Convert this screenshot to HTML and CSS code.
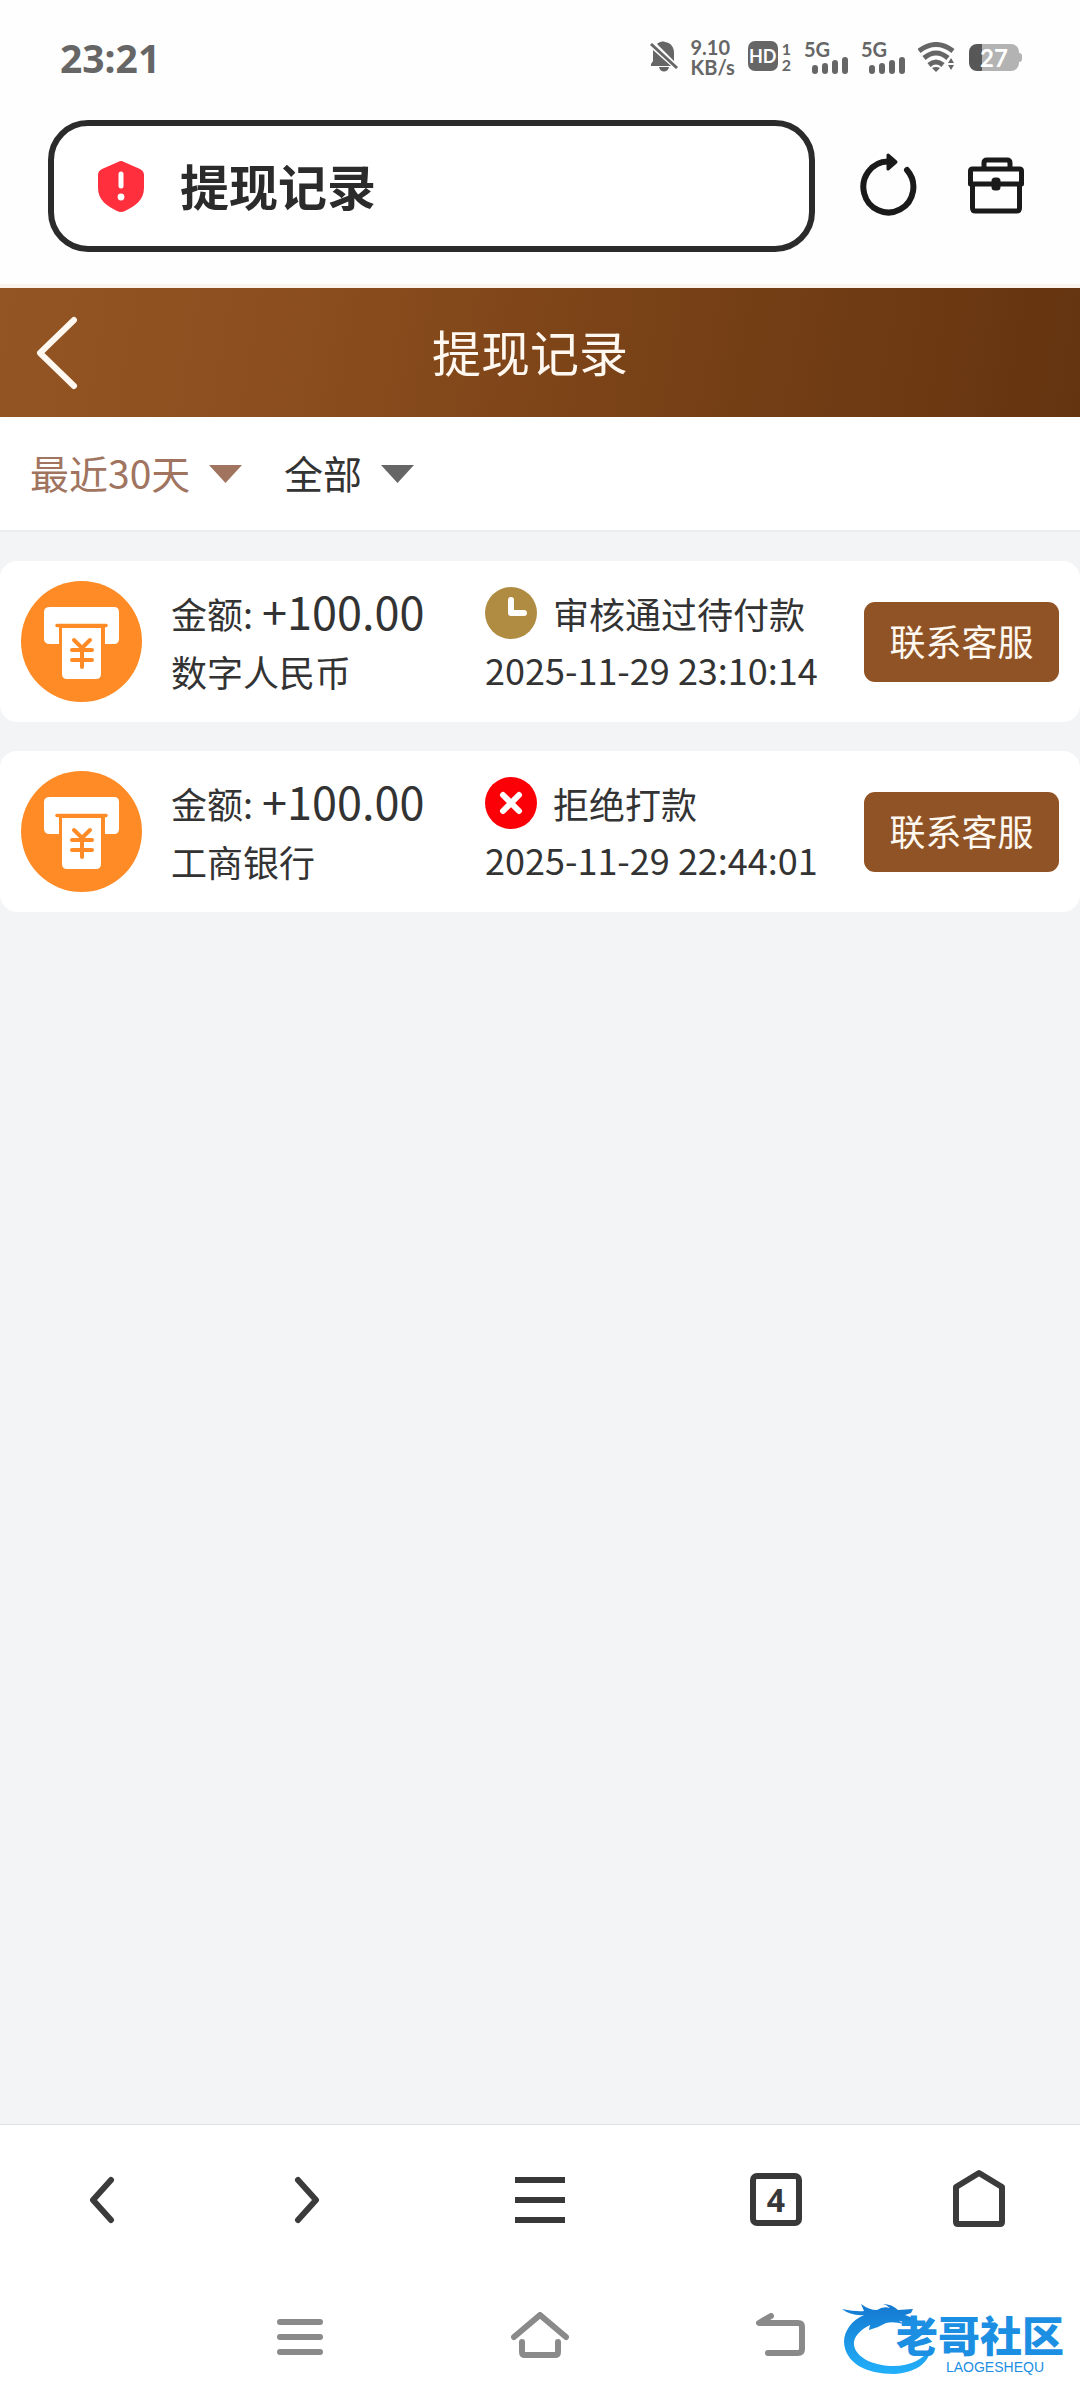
FILE: index.html
```html
<!DOCTYPE html>
<html lang="zh-CN">
<head>
<meta charset="utf-8">
<meta name="viewport" content="width=device-width, initial-scale=1">
<title>提现记录</title>
<link rel="stylesheet" href="styles.css">
</head>
<body>
<div class="status-bar">
  <span class="clock">23:21</span>
  <div class="status-icons">
    <svg class="bell" width="28" height="32" viewBox="0 0 28 32" aria-hidden="true">
      <path fill="#666" d="M7 3C9 1 12 0 15 1c6 1 9 5 9 11v8zM3 9l18 16H1v-2l2-3zM9 26h10c-1 6-9 6-10 0z"/>
      <path d="M1 3l26 24" stroke="#666" stroke-width="3"/>
    </svg>
    <span class="speed"><span>9.10</span><span>KB/s</span></span>
    <span class="hd"><span class="hd-badge">HD</span><span class="sim"><span>1</span><span>2</span></span></span>
    <span class="signal">5G
      <svg width="36" height="17" viewBox="0 0 36 17" aria-hidden="true"><path d="M3 11v3M13 9v5M23 6v8M33 3v11" stroke="#666" stroke-width="6" stroke-linecap="round"/></svg>
    </span>
    <span class="signal">5G
      <svg width="36" height="17" viewBox="0 0 36 17" aria-hidden="true"><path d="M3 11v3M13 9v5M23 6v8M33 3v11" stroke="#666" stroke-width="6" stroke-linecap="round"/></svg>
    </span>
    <svg width="38" height="30" viewBox="0 0 38 30" aria-hidden="true">
      <g fill="none" stroke="#666" stroke-width="5"><path d="M1 9q17-13 34 0"/><path d="M6 16q12-10 24 0"/><path d="M11 23q7-6 14 0"/></g>
      <path fill="#666" d="M14 26q4-2 8 0l-4 4zM30 21l3-5 3 5zM30 23l3 5 3-5z"/>
    </svg>
    <span class="battery">27</span>
  </div>
</div>

<div class="address-bar">
  <label class="address">
    <svg width="46" height="52" viewBox="0 0 46 52" aria-hidden="true">
      <path fill="#ff2f3e" d="M20 2q3-2 6 0l16 7q4 2 4 6v13c0 12-9 18-19 23q-4 2-8 0C9 46 0 40 0 28V15q0-4 4-6z"/>
      <path d="M23 14v12" stroke="#fff" stroke-width="5" stroke-linecap="round"/><circle cx="23" cy="37" r="3.400" fill="#fff"/>
    </svg>
    <input type="text" value="提现记录" aria-label="地址">
  </label>
  <div class="address-actions">
    <button type="button" aria-label="刷新">
      <svg width="60" height="66" viewBox="0 0 60 66" fill="none" aria-hidden="true">
        <path d="M49 17A25 25.500 0 1 1 30 8.500" stroke="#1a1a1a" stroke-width="6" stroke-linecap="round"/>
        <path d="M30 2l8 7-8 7z" fill="#1a1a1a" stroke="#1a1a1a" stroke-width="3" stroke-linejoin="round"/>
      </svg>
    </button>
    <button type="button" aria-label="工具箱">
      <svg width="60" height="66" viewBox="0 0 60 66" fill="none" stroke="#1a1a1a" stroke-width="5" stroke-linejoin="round" aria-hidden="true">
        <path d="M18 15V10q0-3 3-3h20q3 0 3 3v5M4.500 31V18q0-2 2-2h47q2 0 2 2v13zM6.500 31v24q0 3 3 3h41q3 0 3-3V31"/>
        <rect x="28" y="27" width="4" height="8" rx="1"/>
      </svg>
    </button>
  </div>
</div>

<header class="page-header">
  <a class="back" href="#" aria-label="返回">
    <svg width="42" height="74" viewBox="0 0 42 74" aria-hidden="true"><path d="M38 4L4 37l34 33" fill="none" stroke="#fff8f0" stroke-width="6" stroke-linecap="round" stroke-linejoin="round"/></svg>
  </a>
  <h1>提现记录</h1>
</header>

<div class="filters">
  <label class="filter filter-active">
    <select aria-label="时间范围"><option>最近30天</option></select>
    <svg width="33" height="18" viewBox="0 0 33 18" aria-hidden="true"><path d="M0 0h33L16.500 18z" fill="#a0745e"/></svg>
  </label>
  <label class="filter">
    <select aria-label="状态"><option>全部</option></select>
    <svg width="33" height="18" viewBox="0 0 33 18" aria-hidden="true"><path d="M0 0h33L16.500 18z" fill="#666"/></svg>
  </label>
</div>

<main class="records">
  <article class="record">
    <svg class="atm" viewBox="0 0 121 121" aria-hidden="true">
      <circle cx="60.500" cy="60.500" r="60.500" fill="#ff8b26"/>
      <path fill="#fff" d="M29 26h64q5 0 5 5v27q0 5-5 5h-9V46H38v17h-9q-6 0-6-5V31q0-5 6-5z"/>
      <path d="M36 44.500h49" stroke="#ff8b26" stroke-width="3.500" stroke-linecap="round"/>
      <path fill="#fff" d="M41 47h39v46q0 5-5 5H46q-5 0-5-5z"/>
      <path d="M53 59l8 8 8-8M61 67v19M51 69h20M51 79h20" fill="none" stroke="#ff8b26" stroke-width="4" stroke-linecap="round"/>
    </svg>
    <div class="info"><div class="line">金额:<span class="sum">+100.00</span></div><div class="line">数字人民币</div></div>
    <div class="state">
      <div class="line">
        <svg width="52" height="52" viewBox="0 0 52 52" aria-hidden="true"><circle cx="26" cy="26" r="26" fill="#b08c42"/><path d="M26 13v13h13" fill="none" stroke="#fff" stroke-width="6" stroke-linecap="round" stroke-linejoin="round"/></svg>
        审核通过待付款
      </div>
      <div class="line"><time>2025-11-29 23:10:14</time></div>
    </div>
    <button class="contact" type="button">联系客服</button>
  </article>

  <article class="record">
    <svg class="atm" viewBox="0 0 121 121" aria-hidden="true">
      <circle cx="60.500" cy="60.500" r="60.500" fill="#ff8b26"/>
      <path fill="#fff" d="M29 26h64q5 0 5 5v27q0 5-5 5h-9V46H38v17h-9q-6 0-6-5V31q0-5 6-5z"/>
      <path d="M36 44.500h49" stroke="#ff8b26" stroke-width="3.500" stroke-linecap="round"/>
      <path fill="#fff" d="M41 47h39v46q0 5-5 5H46q-5 0-5-5z"/>
      <path d="M53 59l8 8 8-8M61 67v19M51 69h20M51 79h20" fill="none" stroke="#ff8b26" stroke-width="4" stroke-linecap="round"/>
    </svg>
    <div class="info"><div class="line">金额:<span class="sum">+100.00</span></div><div class="line">工商银行</div></div>
    <div class="state">
      <div class="line">
        <svg width="52" height="52" viewBox="0 0 52 52" aria-hidden="true"><circle cx="26" cy="26" r="26" fill="#fb0007"/><path d="M18 18l16 16M34 18L18 34" stroke="#fff" stroke-width="6" stroke-linecap="round"/></svg>
        拒绝打款
      </div>
      <div class="line"><time>2025-11-29 22:44:01</time></div>
    </div>
    <button class="contact" type="button">联系客服</button>
  </article>
</main>

<nav class="toolbar" aria-label="浏览器">
  <button type="button" aria-label="后退"><svg width="28" height="48" viewBox="0 0 28 48" aria-hidden="true"><path d="M24 4L6 24l18 20" class="stroke-dark"/></svg></button>
  <button type="button" aria-label="前进"><svg width="28" height="48" viewBox="0 0 28 48" aria-hidden="true"><path d="M4 4l18 20L4 44" class="stroke-dark"/></svg></button>
  <button type="button" aria-label="菜单"><svg width="50" height="48" viewBox="0 0 50 48" aria-hidden="true"><path d="M0 4h50M0 24h50M0 44h50" stroke="#383838" stroke-width="6"/></svg></button>
  <button type="button" aria-label="标签页"><span class="tab-count">4</span></button>
  <button type="button" aria-label="主页"><svg width="52" height="62" viewBox="0 0 52 62" aria-hidden="true"><path d="M3 18L26 4l23 14v35q0 2-2 2H5q-2 0-2-2z" class="stroke-dark"/></svg></button>
</nav>

<nav class="system-nav" aria-label="系统">
  <button type="button" aria-label="最近任务"><svg width="46" height="38" viewBox="0 0 46 38" aria-hidden="true"><path d="M3 4h40M3 19h40M3 34h40" class="stroke-gray"/></svg></button>
  <button type="button" aria-label="桌面"><svg width="58" height="50" viewBox="0 0 58 50" aria-hidden="true"><path d="M3 25L29 3l26 22M11 30v10q0 3 3 3h30q3 0 3-3V30" class="stroke-gray"/></svg></button>
  <button type="button" aria-label="返回上级"><svg width="50" height="48" viewBox="0 0 50 48" aria-hidden="true"><path d="M16 3L4 10h39q4 0 4 4v22q0 4-4 4H13" class="stroke-gray"/></svg></button>
  <div class="watermark">
    <svg width="100" height="80" viewBox="0 0 100 80" aria-hidden="true">
      <defs><linearGradient id="sea" x2="0" y2="1"><stop stop-color="#1478cf"/><stop offset="1" stop-color="#22b0fa"/></linearGradient></defs>
      <path fill="url(#sea)" d="M0 9q15 3 22 2l-3-7q8 6 16 6 6-4 13-2-3-3-7-4 9 0 15 6l15-1-2 4-6 2 8 3-3 4-11-1 5 3q-11-3-18-1l-8 4-9 3 1-5C18 30 11 37 12 45c2 13 20 21 40 21 16 0 30-7 37-18C87 64 72 73 52 74 24 74 3 63 2 42 2 31 10 20 22 15Q9 16 0 9z"/>
    </svg>
    <span class="mark-name">老哥社区</span>
    <span class="mark-latin">LAOGESHEQU</span>
  </div>
</nav>
</body>
</html>
```
FILE: styles.css
```css
* { box-sizing: border-box; }

body {
  margin: 0;
  min-height: 100vh;
  display: flex;
  flex-direction: column;
  background: #f3f4f6;
  color: #333;
  font-family: "Noto Sans CJK SC", "Noto Sans", sans-serif;
  font-size: 36px;
}

button, input, select {
  margin: 0;
  padding: 0;
  border: 0;
  background: none;
  color: inherit;
  font: inherit;
}

svg { display: block; flex: none; }

/* Phone status bar */
.status-bar {
  height: 114px;
  padding: 0 61px 0 60px;
  display: flex;
  align-items: center;
  justify-content: space-between;
  background: #fefefe;
  color: #666;
  font-family: "Noto Sans", sans-serif;
  font-weight: 700;
}
.clock { font-size: 39px; }
.status-icons {
  display: flex;
  align-items: center;
  gap: 13px;
  font-family: Lato, sans-serif;
}
.speed {
  display: flex;
  flex-direction: column;
  font-size: 20px;
  line-height: 20px;
}
.hd { display: flex; gap: 4px; }
.hd-badge {
  width: 30px;
  height: 30px;
  border-radius: 7px;
  background: #666;
  color: #fff;
  font-size: 18px;
  line-height: 30px;
  text-align: center;
}
.sim {
  display: flex;
  flex-direction: column;
  font-size: 16px;
  line-height: 16px;
}
.signal {
  width: 44px;
  height: 32px;
  display: flex;
  flex-direction: column;
  font-size: 20px;
  line-height: 16px;
}
.signal svg { align-self: flex-end; }
.battery {
  position: relative;
  width: 50px;
  height: 27px;
  border-radius: 8px;
  background: linear-gradient(90deg, #575757 27%, #b3b3b3 27%);
  color: #fff;
  font-size: 24px;
  line-height: 27px;
  text-align: center;
}
.battery::after {
  content: "";
  position: absolute;
  top: 9px;
  right: -3px;
  width: 3px;
  height: 9px;
  border-radius: 0 3px 3px 0;
  background: #b3b3b3;
}

/* Browser address bar */
.address-bar {
  padding: 6px 54px 32px 48px;
  border-bottom: 4px solid #faf4ef;
  display: flex;
  align-items: center;
  gap: 43px;
  background: #fefefe;
}
.address {
  flex: 1;
  min-width: 0;
  height: 132px;
  padding: 0 44px;
  border: 6px solid #2b2b2b;
  border-radius: 40px;
  display: flex;
  align-items: center;
  gap: 36px;
  background: #fff;
}
.address input {
  flex: 1;
  min-width: 0;
  padding-bottom: 4px;
  color: #2b2b2b;
  font-size: 49px;
  font-weight: 700;
}
.address-actions { display: flex; gap: 48px; }

/* Page header */
.page-header {
  height: 129px;
  display: grid;
  grid-template-columns: 100px 1fr 120px;
  align-items: center;
  background: linear-gradient(100deg, #935523, #8a4d1d 30%, #7a4217 58%, #643410);
}
.back { padding-left: 36px; }
.page-header h1 {
  margin: 0;
  padding-bottom: 4px;
  color: #fff8f0;
  font-size: 49px;
  font-weight: 400;
  text-align: center;
}

/* Filters */
.filters {
  height: 115px;
  padding: 0 30px;
  border-bottom: 2px solid #ebecee;
  display: flex;
  align-items: center;
  gap: 42px;
  background: #fff;
}
.filter { display: flex; align-items: center; gap: 18px; }
.filter-active { color: #a0745e; }
.filter select {
  appearance: none;
  padding-bottom: 4px;
  font-size: 39px;
}

/* Withdrawal records */
.records {
  flex: 1;
  padding: 29px 0;
  display: flex;
  flex-direction: column;
  gap: 29px;
}
.record {
  height: 161px;
  padding: 0 21px;
  border-radius: 17px;
  display: grid;
  grid-template-columns: 121px 285px 1fr 195px;
  column-gap: 29px;
  align-items: center;
  background: #fff;
}
.atm { width: 121px; height: 121px; }
.line {
  height: 58px;
  display: flex;
  align-items: center;
  white-space: nowrap;
}
.sum {
  margin-left: 9px;
  padding-bottom: 4px;
  font-size: 45px;
}
.state .line { gap: 16px; }
.state time { padding-bottom: 4px; }
.contact {
  height: 80px;
  padding-bottom: 4px;
  border-radius: 11px;
  background: #8f5325;
  color: #fff8f0;
}

/* Browser toolbar */
.toolbar {
  height: 150px;
  padding-right: 8px;
  border-top: 1px solid #dfe1e5;
  display: grid;
  grid-template-columns: 202fr 212fr 252fr 220fr 186fr;
  background: #fff;
}
.toolbar button, .system-nav button {
  display: flex;
  align-items: center;
  justify-content: center;
}
.stroke-dark, .stroke-gray {
  fill: none;
  stroke: #3b3b3b;
  stroke-width: 6px;
  stroke-linecap: round;
  stroke-linejoin: round;
}
.stroke-gray { stroke: #8a8a8a; }
.tab-count {
  width: 52px;
  height: 53px;
  border: 6px solid #383838;
  border-radius: 7px;
  color: #383838;
  font-family: "Noto Sans", sans-serif;
  font-size: 32px;
  font-weight: 700;
  line-height: 41px;
}

/* System navigation */
.system-nav {
  position: relative;
  height: 126px;
  padding: 0 16.666%;
  display: grid;
  grid-template-columns: repeat(3, 1fr);
  background: #fff;
}

/* Site mark laid over the corner of the screen */
.watermark {
  position: absolute;
  right: 16px;
  bottom: 20px;
  width: 222px;
  height: 80px;
  color: #1c8fe3;
}
.mark-name {
  position: absolute;
  right: 0;
  top: 13px;
  font-size: 42px;
  font-weight: 900;
  line-height: 42px;
}
.mark-latin {
  position: absolute;
  right: 20px;
  top: 60px;
  font-family: "Liberation Sans", sans-serif;
  font-size: 14px;
  line-height: 14px;
}
```
